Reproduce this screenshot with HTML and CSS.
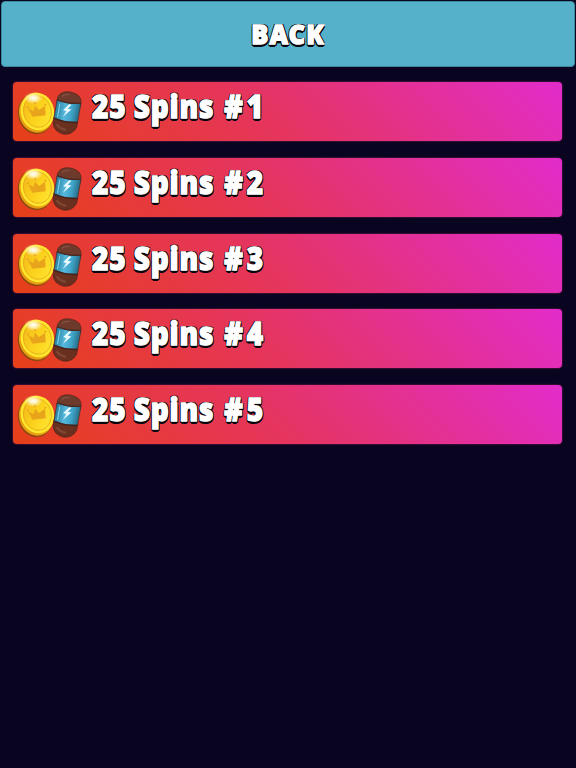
FILE: index.html
```html
<!DOCTYPE html>
<html lang="en">
<head>
    <meta charset="UTF-8">
    <meta name="viewport" content="width=device-width, initial-scale=1.0">
    <title>Spins</title>
    <link rel="stylesheet" href="styles.css">
</head>
<body>

<svg class="defs" width="0" height="0">
    <defs>
        <linearGradient id="gold" x1="0" y1="0" x2="1" y2="1">
            <stop offset="0" stop-color="#f3b51c"/>
            <stop offset="0.5" stop-color="#fbd11c"/>
            <stop offset="1" stop-color="#ffe936"/>
        </linearGradient>
        <linearGradient id="glass" x1="0" y1="0" x2="1" y2="0">
            <stop offset="0" stop-color="#277f9e"/>
            <stop offset="0.4" stop-color="#55b8dc"/>
            <stop offset="0.7" stop-color="#3fa3c8"/>
            <stop offset="1" stop-color="#286d86"/>
        </linearGradient>
        <radialGradient id="shine">
            <stop offset="0" stop-color="#ffffff"/>
            <stop offset="0.4" stop-color="#fffbe0" stop-opacity="0.8"/>
            <stop offset="1" stop-color="#fff3a0" stop-opacity="0"/>
        </radialGradient>
    </defs>
    <symbol id="reward" viewBox="18 30 204 138">
        <!-- coin -->
        <g transform="rotate(-14 80 98)">
            <ellipse cx="75" cy="101" rx="52" ry="61" fill="#8f4a12"/>
            <ellipse cx="78" cy="99" rx="51" ry="59" fill="#e7a012"/>
            <ellipse cx="83" cy="95" rx="50" ry="57" fill="#ffe52c"/>
            <ellipse cx="83" cy="95" rx="42" ry="48" fill="url(#gold)" stroke="#dba016" stroke-width="2"/>
        </g>
        <path d="M54 84 L70 93 L75 77 L87 90 L105 77 L107 106 L67 110 Z" fill="#e8a51c"/>
        <circle cx="54" cy="82" r="3" fill="#e8a51c"/>
        <circle cx="75" cy="69" r="4" fill="#e8a51c"/>
        <circle cx="106" cy="74" r="3" fill="#e8a51c"/>
        <ellipse cx="70" cy="54" rx="29" ry="18" fill="url(#shine)"/>
        <!-- spin capsule -->
        <g transform="rotate(10 170 99)">
            <path d="M135 74 V58 Q140 36 170 35 Q202 36 207 58 V74 Z" fill="#6e3a2c" stroke="#54251b" stroke-width="2"/>
            <path d="M147 53 Q153 44 169 43" fill="none" stroke="#85503e" stroke-width="4"/>
            <path d="M135 118 H207 V136 Q198 162 171 163 Q142 161 135 136 Z" fill="#69301f" stroke="#4b2019" stroke-width="2"/>
            <path d="M146 137 Q156 149 177 149" fill="none" stroke="#7d4532" stroke-width="7"/>
            <path d="M135 65 Q170 73 207 64 V121 Q170 129 135 121 Z" fill="url(#glass)" stroke="#43302d" stroke-width="2"/>
            <path d="M135 65 Q170 72 207 63" fill="none" stroke="#4c2921" stroke-width="4"/>
            <path d="M135 121 Q170 130 207 121" fill="none" stroke="#482119" stroke-width="4"/>
            <path d="M145 75 V116" stroke="#85d4e9" stroke-width="3"/>
            <path d="M173 72 L158 93 L168 93 L161 112 L182 86 L171 86 L180 72 Z" fill="#e9faff"/>
        </g>
    </symbol>
</svg>

<header class="back"><span>BACK</span></header>

<main class="list">
    <div class="card">
        <svg class="icon"><use href="#reward"/></svg>
        <div class="title"><span>25</span><span>Spins</span><span class="num">#1</span></div>
    </div>
    <div class="card">
        <svg class="icon"><use href="#reward"/></svg>
        <div class="title"><span>25</span><span>Spins</span><span class="num">#2</span></div>
    </div>
    <div class="card">
        <svg class="icon"><use href="#reward"/></svg>
        <div class="title"><span>25</span><span>Spins</span><span class="num">#3</span></div>
    </div>
    <div class="card">
        <svg class="icon"><use href="#reward"/></svg>
        <div class="title"><span>25</span><span>Spins</span><span class="num">#4</span></div>
    </div>
    <div class="card">
        <svg class="icon"><use href="#reward"/></svg>
        <div class="title"><span>25</span><span>Spins</span><span class="num">#5</span></div>
    </div>
</main>

</body>
</html>
```
FILE: styles.css
```css
* {
    box-sizing: border-box;
}

body {
    margin: 0;
    min-height: 100vh;
    background: #090420;
    font-family: "Noto Sans", "Open Sans", sans-serif;
    font-weight: 900;
    color: #fff;
    overflow: hidden;
}

.defs {
    display: block;
}

.back,
.title {
    -webkit-text-stroke: 1.4px #fff;
    text-shadow: -1.4px -1px 0 #08060c, 1.4px -1px 0 #08060c, -1.4px 1px 0 #08060c,
        1.4px 1px 0 #08060c, -1.4px 2px 0 #08060c, 1.4px 2px 0 #08060c, 0 3px 0 #08060c;
}

.back {
    height: 66px;
    margin: 1px 1px 0;
    border: 1px solid #3a8ba0;
    border-radius: 4px;
    background: #55b1c9;
    font-size: 27px;
    line-height: 63px;
    letter-spacing: 1.2px;
    text-align: center;
}

.back span {
    display: inline-block;
    transform: scaleX(0.94);
}

.list {
    display: flex;
    flex-direction: column;
    gap: 16.75px;
    padding: 15px 14px 0 13px;
}

.card {
    display: flex;
    align-items: flex-start;
    height: 59px;
    padding: 7px 3px;
    border-radius: 4px;
    background: linear-gradient(45deg, #e64018 0%, #e5355c 45%, #e22ccc 100%);
    box-shadow: 0 0 2px #a02860;
}

.icon {
    width: 68px;
    height: 46px;
    margin-top: 1px;
}

.title {
    display: flex;
    gap: 8px;
    margin-left: 8px;
    font-size: 31px;
    line-height: 34px;
    letter-spacing: 1px;
    transform: scaleX(0.9);
    transform-origin: left;
}

.num {
    margin-left: 3px;
    letter-spacing: 4.5px;
}
```
